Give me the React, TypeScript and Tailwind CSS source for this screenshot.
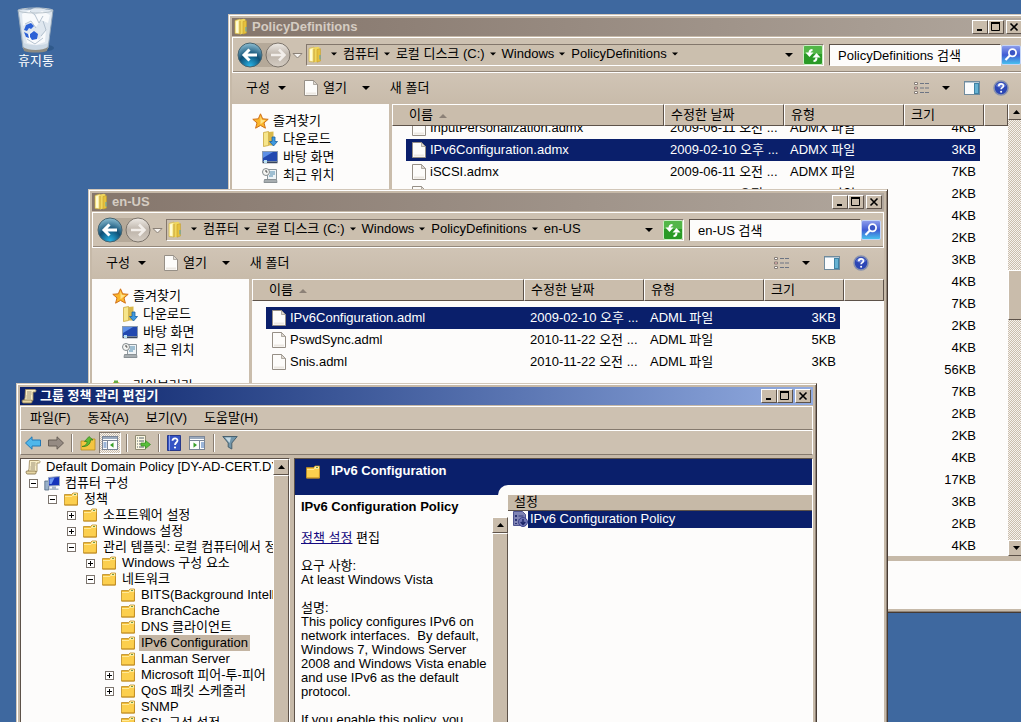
import type { ReactNode } from 'react';
import clsx from 'clsx';

type FileRow = { name?: string; date?: string; type?: string; size: string; selected?: boolean };

const POLICY_FILES: FileRow[] = [
  { name: 'InputPersonalization.admx', date: '2009-06-11 오전 ...', type: 'ADMX 파일', size: '4KB' },
  { name: 'IPv6Configuration.admx', date: '2009-02-10 오후 ...', type: 'ADMX 파일', size: '3KB', selected: true },
  { name: 'iSCSI.admx', date: '2009-06-11 오전 ...', type: 'ADMX 파일', size: '7KB' },
  { name: 'kdc.admx', date: '2009-06-11 오전 ...', type: 'ADMX 파일', size: '2KB' },
  // the en-US window covers everything but the size from here on
  { size: '4KB' },
  { size: '2KB' },
  { size: '3KB' },
  { size: '4KB' },
  { size: '7KB' },
  { size: '2KB' },
  { size: '4KB' },
  { size: '56KB' },
  { size: '7KB' },
  { size: '2KB' },
  { size: '2KB' },
  { size: '4KB' },
  { size: '17KB' },
  { size: '3KB' },
  { size: '2KB' },
  { size: '4KB' },
];

const LOCALE_FILES: FileRow[] = [
  { name: 'IPv6Configuration.adml', date: '2009-02-10 오후 ...', type: 'ADML 파일', size: '3KB', selected: true },
  { name: 'PswdSync.adml', date: '2010-11-22 오전 ...', type: 'ADML 파일', size: '5KB' },
  { name: 'Snis.adml', date: '2010-11-22 오전 ...', type: 'ADML 파일', size: '3KB' },
];

type TreeNode = { label: string; level: number; state?: 'open' | 'closed'; icon?: 'scroll' | 'computer'; selected?: boolean };

const TREE: TreeNode[] = [
  { label: 'Default Domain Policy [DY-AD-CERT.DY', level: 0, icon: 'scroll' },
  { label: '컴퓨터 구성', level: 1, state: 'open', icon: 'computer' },
  { label: '정책', level: 2, state: 'open' },
  { label: '소프트웨어 설정', level: 3, state: 'closed' },
  { label: 'Windows 설정', level: 3, state: 'closed' },
  { label: '관리 템플릿: 로컬 컴퓨터에서 정', level: 3, state: 'open' },
  { label: 'Windows 구성 요소', level: 4, state: 'closed' },
  { label: '네트워크', level: 4, state: 'open' },
  { label: 'BITS(Background Intelli', level: 5 },
  { label: 'BranchCache', level: 5 },
  { label: 'DNS 클라이언트', level: 5 },
  { label: 'IPv6 Configuration', level: 5, selected: true },
  { label: 'Lanman Server', level: 5 },
  { label: 'Microsoft 피어-투-피어', level: 5, state: 'closed' },
  { label: 'QoS 패킷 스케줄러', level: 5, state: 'closed' },
  { label: 'SNMP', level: 5 },
  { label: 'SSL 구성 설정', level: 5 },
];

const LEVEL_PAD = ['pl-1', 'pl-2', 'pl-[27px]', 'pl-[46px]', 'pl-[65px]', 'pl-[84px]'];

const RAISED = 'border border-t-white border-l-white border-r-[#5d5249] border-b-[#5d5249] bg-[#c9bcab]';

/* ---------- icons ---------- */

function Caret({ className = 'w-[7px]' }: { className?: string }) {
  return (
    <svg viewBox="0 0 8 4" className={clsx('h-1 shrink-0', className)} aria-hidden>
      <path d="M0 0h8L4 4z" fill="currentColor" />
    </svg>
  );
}

function ExplorerFolder() {
  return (
    <svg width="16" height="18" viewBox="0 0 16 18" className="shrink-0" aria-hidden>
      <path d="M2 2.500l5-1.500v15l-5-.5z" fill="#fbf0a0" stroke="#d0ae3c" strokeWidth=".6" />
      <path d="M7 1.500l4-.8 1.500.8V15L7 16.500z" fill="#f0d65c" />
      <path d="M3 3.500l2-.5v12L3 14.500z" fill="#fffbd6" />
      <path d="M7 3v13" stroke="#caa233" />
      <path d="M10 3.500l3.500-.8V15l-3.500 1.200z" fill="#e5c03c" stroke="#c09a2a" strokeWidth=".5" />
      <path d="M13 9v4.500" stroke="#4fa3c4" />
    </svg>
  );
}

function TreeFolder() {
  return (
    <svg width="16" height="14" viewBox="0 0 16 14" className="shrink-0" aria-hidden>
      <path d="M1.500 2.500h7l1.500-1.500h4.500v12h-13z" fill="#f3bd36" stroke="#b98a24" strokeWidth=".8" />
      <path d="M10 1.500h4v2.500H9z" fill="#fff1b5" />
      <path d="M11 2.500h2" stroke="#6f9a4a" />
      <path d="M2 4.500h7l1-1h4.200l-.7 9H1.800z" fill="#fccf4e" />
      <path d="M2 4.500h7l1-1h4" stroke="#ffe998" fill="none" />
      <path d="M1.500 13h13V4.500" fill="none" stroke="#c38f27" />
    </svg>
  );
}

function FileIcon() {
  return (
    <svg width="14" height="16" viewBox="0 0 14 16" className="shrink-0" aria-hidden>
      <path d="M.5.5h9l4 4v11H.5z" fill="#fdfcfa" stroke="#968f86" />
      <path d="M9.500.5v4h4z" fill="#ddd8d0" stroke="#968f86" strokeWidth=".7" />
      <path d="M2 13.500h10" stroke="#ece8e2" strokeWidth="2" />
    </svg>
  );
}

function StarIcon() {
  return (
    <svg width="17" height="16" viewBox="0 0 17 16" className="shrink-0" aria-hidden>
      <path d="M8.500.8l2.200 5 5.500.5-4.200 3.600 1.400 5.300-4.900-2.800-4.900 2.800L5 9.900.8 6.300l5.500-.5z" fill="#fbb72c" stroke="#d0701a" />
      <path d="M8.500 3l1.400 4 3.600.3-5 4z" fill="#ffe58a" />
    </svg>
  );
}

function DownloadIcon() {
  return (
    <svg width="16" height="16" viewBox="0 0 16 16" className="shrink-0" aria-hidden>
      <path d="M1.500 1.500l5-1v14l-5 1z" fill="#f6e58a" stroke="#c39c2c" strokeWidth=".7" />
      <path d="M6.500 1l5-.5v14h-5z" fill="#d9b849" />
      <path d="M10 6h3v4.500h2.500l-4 4.500-4-4.500H10z" fill="#3f9ae0" stroke="#1c5f9f" strokeWidth=".8" />
    </svg>
  );
}

function DesktopIcon() {
  return (
    <svg width="16" height="14" viewBox="0 0 16 14" className="shrink-0" aria-hidden>
      <rect x=".5" y="1.500" width="15" height="10" fill="#2248b0" stroke="#8b9bb0" />
      <path d="M1 2h10L1 8z" fill="#5d8fe6" />
      <path d="M.5 12.500h15" stroke="#38455c" strokeWidth="1.500" />
      <path d="M2 13v-3h3v3z" fill="#b9e0f3" />
    </svg>
  );
}

function RecentIcon() {
  return (
    <svg width="16" height="15" viewBox="0 0 16 15" className="shrink-0" aria-hidden>
      <path d="M5.500 1.500h9v10h-9z" fill="#eef3f6" stroke="#8d979d" />
      <path d="M8 4h5M8 6h5M7 8h4" stroke="#4e89ad" />
      <circle cx="4" cy="4" r="3.500" fill="#f6f6f3" stroke="#848b8e" />
      <path d="M4 2v2h1.500" stroke="#444" fill="none" />
      <path d="M2.500 11.500h12l.5 3H2z" fill="#a7adb0" stroke="#8a9195" />
    </svg>
  );
}

function LibraryIcon() {
  return (
    <svg width="16" height="14" viewBox="0 0 16 14" className="shrink-0" aria-hidden>
      <path d="M1 3h6l1 1.500h6V13H1z" fill="#eacb55" />
      <path d="M2 1.500h4v3H2z" fill="#65ac45" />
      <path d="M8 5h7v7H8z" fill="#72b7dc" />
    </svg>
  );
}

function ScrollIcon() {
  return (
    <svg width="16" height="16" viewBox="0 0 16 16" className="shrink-0" aria-hidden>
      <path d="M4.500 1.500h9c2 0 2 2.500.5 2.500h-2v8.500h-9L4 10z" fill="#f8edc6" stroke="#a28f65" strokeWidth=".9" />
      <path d="M1.500 12h9c1 1 .8 3-.5 3H2.500c-1.500 0-1.700-2-1-3z" fill="#e7d6a3" stroke="#8b7b54" strokeWidth=".9" />
      <path d="M6 4h4.500M6 6h4.500M5.500 8H10M5.500 10H10" stroke="#9b8f76" />
    </svg>
  );
}

function ComputerIcon() {
  return (
    <svg width="17" height="15" viewBox="0 0 17 15" className="shrink-0" aria-hidden>
      <path d="M.8 5h4v9h-4z" fill="#97afc9" stroke="#52677f" strokeWidth=".8" />
      <path d="M4.500 1.500l11-1v9l-11 .5z" fill="#1533bb" stroke="#9aa8c0" />
      <path d="M5.500 2.500l5-.5-3 6h-2z" fill="#6f98ef" />
      <path d="M8 10.500h4v2H8zM5.500 12.500h9V14h-9z" fill="#aab7c7" />
    </svg>
  );
}

function HelpIcon() {
  return (
    <svg width="16" height="16" viewBox="0 0 16 16" aria-hidden>
      <circle cx="8" cy="8" r="7" fill="#2c46b5" stroke="#8690ae" strokeWidth="1.500" />
      <path d="M3 6a5.500 5.500 0 0110 0c-3 2-7 2-10 0z" fill="#7c92e2" opacity=".7" />
      <path d="M5.800 6.200c0-3 4.600-3 4.600-.3 0 1.700-2.300 1.700-2.300 3.400" fill="none" stroke="#fff" strokeWidth="1.700" />
      <circle cx="8.100" cy="11.700" r="1" fill="#fff" />
    </svg>
  );
}

function ListViewIcon() {
  return (
    <svg width="16" height="14" viewBox="0 0 16 14" aria-hidden>
      <path d="M.5 1.500h3v2h-3zM.5 6h3v2h-3zM.5 10.500h3v2h-3z" fill="#fff" stroke="#877e78" />
      <path d="M1.500 7h1" stroke="#b33" />
      <path d="M6 2.500h4M11 2.500h4M6 7h4M11 7h4M6 11.500h4M11 11.500h4" stroke="#6d7584" />
    </svg>
  );
}

function PreviewIcon() {
  return (
    <svg width="17" height="14" viewBox="0 0 17 14" aria-hidden>
      <rect x=".5" y=".5" width="15" height="13" fill="#fbfcfd" stroke="#708b9d" />
      <path d="M1 1.500h14" stroke="#b7c9d6" />
      <rect x="10.500" y="2.500" width="4" height="10" fill="#67b2d3" stroke="#3f83a5" />
    </svg>
  );
}

function NavButtons() {
  return (
    <div className="relative flex h-[26px] w-[72px] shrink-0 items-center pl-1">
      <svg width="68" height="26" viewBox="0 0 68 26" className="absolute left-1 top-0" aria-hidden>
        <defs>
          <radialGradient id="nav-back" cx=".5" cy=".95" r=".95">
            <stop offset="0" stopColor="#27b3e6" />
            <stop offset=".5" stopColor="#0f4f75" />
            <stop offset="1" stopColor="#8fc0d4" />
          </radialGradient>
          <linearGradient id="nav-fwd" x2="0" y2="1">
            <stop offset="0" stopColor="#efebe6" />
            <stop offset=".5" stopColor="#bdb4aa" />
            <stop offset="1" stopColor="#d5cdc3" />
          </linearGradient>
        </defs>
        <path d="M13 1h28v24H13z" fill="#b5a999" />
        <circle cx="13" cy="13" r="12" fill="url(#nav-back)" stroke="#46636f" />
        <path d="M12.500 7.500L7 13l5.500 5.500M7.500 13H20" fill="none" stroke="#fff" strokeWidth="3" />
        <circle cx="41" cy="13" r="12" fill="url(#nav-fwd)" stroke="#7c746b" />
        <path d="M42 7.500l5.500 5.500-5.500 5.500M47 13H34" fill="none" stroke="#f2eeea" strokeWidth="2.500" />
        <path d="M56 11.500h9L60.500 16z" fill="#f6f3ef" stroke="#8b8177" />
      </svg>
      <button aria-label="뒤로" className="relative h-[26px] w-[26px] rounded-full" />
      <button aria-label="앞으로" className="relative ml-0.5 h-[26px] w-[26px] rounded-full" />
    </div>
  );
}

function RefreshIcon() {
  return (
    <svg width="20" height="20" viewBox="0 0 20 20" aria-hidden>
      <rect x=".5" y=".5" width="19" height="19" rx="1.500" fill="#2a9a26" stroke="#c9efc2" />
      <path d="M1 1h18v8H1z" fill="#6fca5f" opacity=".6" />
      <path d="M9.500 5C7 5 6.500 6 6.500 8" fill="none" stroke="#fff" strokeWidth="2" />
      <path d="M2.500 7.500h8l-4 4.500z" fill="#fff" />
      <path d="M10.500 16c2.500 0 3-1 3-3.500" fill="none" stroke="#fff" strokeWidth="2" />
      <path d="M9.500 12.500h8L13.500 8z" fill="#fff" />
    </svg>
  );
}

function SearchIcon() {
  return (
    <svg width="20" height="20" viewBox="0 0 20 20" aria-hidden>
      <defs>
        <linearGradient id="search-fill" x2="0" y2="1">
          <stop offset="0" stopColor="#8f9fec" />
          <stop offset=".5" stopColor="#3f5cd4" />
          <stop offset="1" stopColor="#49c6ef" />
        </linearGradient>
      </defs>
      <rect x=".5" y=".5" width="19" height="19" rx="1.500" fill="url(#search-fill)" stroke="#c4d4f6" />
      <circle cx="11.500" cy="7.800" r="3.600" fill="#3a55c4" stroke="#fff" strokeWidth="1.800" />
      <path d="M8.800 10.500L4.500 15" stroke="#fff" strokeWidth="2.200" />
    </svg>
  );
}

function TrashIcon() {
  return (
    <svg width="40" height="46" viewBox="0 0 40 46" aria-hidden>
      <ellipse cx="23" cy="41" rx="15" ry="4" fill="#27507f" opacity=".6" />
      <path d="M2 3l5 38c2 4 22 4 25 0l5-38z" fill="#cbd8e4" stroke="#96a8ba" />
      <path d="M3 4c4-4 9 0 13-2s9-1 12 0 7 0 8 3L32 36c-5 3-19 3-24 0z" fill="#dfe7ef" />
      <path d="M6 7l8-4 5 5 7-4 8 4-2 8-7-3-5 7-7-5-6 4zM10 30l6-6 7 9 7-10-1 12-9 3-9-2z" fill="#f8fafc" />
      <path d="M14 4l5 4 4 8 4-7M9 17l6-3 5 7M27 14l3 9-5 6M11 32l8 5 8-6" fill="none" stroke="#aebccb" strokeWidth=".9" />
      <path d="M10 18l5-2 3 3-3 3-2-1-2 3-3-1zM8 25l4 2 1 4-3-1zM14 27l4-3 4 3-1 5-5 1-2-3z" fill="#2c61d6" />
      <path d="M7 40c5 4 20 4 25 0l-1 4c-5 2-18 2-23 0z" fill="#8d8b83" />
      <ellipse cx="19.500" cy="3.500" rx="17.500" ry="2.500" fill="none" stroke="#b9c4cc" />
    </svg>
  );
}

function ArrowIcon({ right = false }: { right?: boolean }) {
  return (
    <svg width="16" height="14" viewBox="0 0 16 14" aria-hidden>
      {right ? (
        <path d="M15.500 7L9 .8V4H.5v6H9v3.200z" fill="#958b83" stroke="#675e57" />
      ) : (
        <path d="M.5 7L7 .8V4h8.500v6H7v3.200z" fill="#4fb7ea" stroke="#2278b5" />
      )}
    </svg>
  );
}

function FolderUpIcon() {
  return (
    <svg width="16" height="16" viewBox="0 0 16 16" aria-hidden>
      <path d="M1 6h7l1.500-2H15v11H1z" fill="#f4c542" stroke="#b98a24" strokeWidth=".8" />
      <path d="M2 11.500c4-1 5-2.500 5-5H4.500L9 1.500l4 3.500h-2.500c0 4-3 7-8.500 6.500z" fill="#5fbb34" stroke="#2f7d1b" strokeWidth=".7" />
    </svg>
  );
}

function ConsoleIcon({ right = false }: { right?: boolean }) {
  return (
    <svg width="16" height="14" viewBox="0 0 16 14" aria-hidden>
      <rect x=".5" y=".5" width="15" height="13" fill="#fdfdfd" stroke="#7a8596" />
      <path d="M1 2h14" stroke="#9aa9bd" strokeWidth="2" />
      <path d="M1 4.500h14" stroke="#7a8596" />
      {right ? (
        <>
          <path d="M10.500 5v8" stroke="#7a8596" />
          <path d="M12 7h3M12 9h3M12 11h3" stroke="#3a6fb5" />
          <path d="M4.500 6.500L8 9l-3.500 2.800z" fill="#39a02a" />
        </>
      ) : (
        <>
          <path d="M5.500 5v8" stroke="#7a8596" />
          <path d="M1.500 7h3M1.500 9h3M1.500 11h3" stroke="#3a6fb5" />
          <path d="M11.500 6.500L8 9l3.500 2.800z" fill="#39a02a" />
        </>
      )}
    </svg>
  );
}

function ExportIcon() {
  return (
    <svg width="16" height="15" viewBox="0 0 16 15" aria-hidden>
      <path d="M.5.5h10v14H.5z" fill="#fbf7e2" stroke="#8f8a72" />
      <path d="M2 3h1M4 3h5M2 6h1M4 6h5M2 9h1M4 9h3M2 12h1M4 12h5" stroke="#55606a" />
      <path d="M6 8h4.500V5.500l5 4-5 4V11H6z" fill="#58bf3a" stroke="#348a1f" strokeWidth=".7" />
    </svg>
  );
}

function BookHelpIcon() {
  return (
    <svg width="14" height="16" viewBox="0 0 14 16" aria-hidden>
      <path d="M.5.5h13v15H.5z" fill="#3654c4" stroke="#27388a" />
      <path d="M2.500.5v15" stroke="#8ea3ec" />
      <path d="M5.500 5.800c0-3.200 5-3.200 5-.3C10.500 7.500 8 7.500 8 10" fill="none" stroke="#fff" strokeWidth="1.800" />
      <circle cx="8" cy="12.500" r="1.100" fill="#fff" />
    </svg>
  );
}

function FilterIcon() {
  return (
    <svg width="16" height="15" viewBox="0 0 16 15" aria-hidden>
      <path d="M.8 1.500h14.400L9.800 8v6L6.200 12V8z" fill="#7397ab" stroke="#48616f" />
      <path d="M3 2.500h6L7.500 8z" fill="#c7dae3" />
    </svg>
  );
}

function PolicyIcon() {
  return (
    <svg width="16" height="16" viewBox="0 0 16 16" className="shrink-0" aria-hidden>
      <path d="M1.500.5h9l3 3v11h-12z" fill="#8084b4" stroke="#4e5490" />
      <path d="M3 4h2v2H3zM3 8h2v2H3zM3 12h2v1H3z" fill="#2c3474" />
      <path d="M6.500 5h5M6.500 9h2" stroke="#343c7c" />
      <circle cx="11" cy="11" r="4.500" fill="#7176b4" stroke="#3f458c" />
      <path d="M11 8v5M8.700 11l2.300 2.500 2.300-2.500" stroke="#1a2468" strokeWidth="1.400" fill="none" />
    </svg>
  );
}

/* ---------- window chrome ---------- */

function ControlButton({ label, children }: { label: string; children: ReactNode }) {
  return (
    <button aria-label={label} className={clsx('flex h-3.5 w-4 items-center justify-center', RAISED)}>
      <svg width="10" height="10" viewBox="0 0 10 10" fill="none" stroke="#000" aria-hidden>
        {children}
      </svg>
    </button>
  );
}

function TitleBar({ title, icon, active = false }: { title: string; icon: ReactNode; active?: boolean }) {
  return (
    <div
      className={clsx(
        'flex h-[18px] shrink-0 items-center gap-[3px] overflow-hidden pr-0.5 pl-px font-bold',
        active
          ? 'bg-linear-to-r from-[#0a1f68] to-[#92abe0] text-white'
          : 'bg-linear-to-r from-[#85766c] to-[#b0a69c] text-[#d5ccc2]',
      )}
    >
      {icon}
      <h2 className="flex-1 text-[13px] leading-[18px]">{title}</h2>
      <div className="flex">
        <ControlButton label="최소화">
          <path d="M2 8h5" strokeWidth="2" />
        </ControlButton>
        <ControlButton label="최대화">
          <path d="M.5 1.500h8v7h-8z" />
          <path d="M0 1h9" strokeWidth="2" />
        </ControlButton>
        <div className="w-0.5" />
        <ControlButton label="닫기">
          <path d="M1.500 1.500l7 7M8.500 1.500l-7 7" strokeWidth="1.600" />
        </ControlButton>
      </div>
    </div>
  );
}

function Window({ className, label, children }: { className: string; label: string; children: ReactNode }) {
  return (
    <section
      aria-label={label}
      className={clsx(
        'absolute flex flex-col border border-t-[#d2c7b9] border-r-[#453a33] border-b-[#453a33] border-l-[#d2c7b9] bg-[#c6b9a8] p-[3px] shadow-[inset_1px_1px_0_#fff,inset_-1px_-1px_0_#918477]',
        className,
      )}
    >
      {children}
    </section>
  );
}

function ScrollArrow({ down = false }: { down?: boolean }) {
  return (
    <button aria-label={down ? '아래로 스크롤' : '위로 스크롤'} className={clsx('flex h-4 w-full shrink-0 items-center justify-center', RAISED)}>
      <svg width="7" height="4" viewBox="0 0 7 4" aria-hidden>
        <path d={down ? 'M0 0h7L3.500 4z' : 'M0 4h7L3.500 0z'} />
      </svg>
    </button>
  );
}

/* ---------- explorer ---------- */

function Sidebar() {
  return (
    <nav className="w-[157px] shrink-0 overflow-hidden bg-[#fdfcfb] pt-2 pl-5 leading-[18px]">
      <a href="#favorites" className="flex items-center gap-1">
        <StarIcon />
        즐겨찾기
      </a>
      <ul className="pl-2.5">
        <li>
          <a href="#downloads" className="flex items-center gap-[5px]">
            <DownloadIcon />
            다운로드
          </a>
        </li>
        <li>
          <a href="#desktop" className="flex items-center gap-[5px]">
            <DesktopIcon />
            바탕 화면
          </a>
        </li>
        <li>
          <a href="#recent" className="flex items-center gap-[5px]">
            <RecentIcon />
            최근 위치
          </a>
        </li>
      </ul>
      <a href="#libraries" className="mt-[18px] flex items-center gap-[5px]">
        <LibraryIcon />
        라이브러리
      </a>
    </nav>
  );
}

const HEAD_CELL = 'block border border-t-white border-l-white border-r-[#5d5249] border-b-[#5d5249] text-left font-normal leading-5';

function FileTable({ files, scrolled = false }: { files: FileRow[]; scrolled?: boolean }) {
  return (
    <table className="flex min-w-0 flex-1 flex-col overflow-hidden bg-[#fdfcfb]">
      <thead className="relative z-10 block bg-[#cabdac]">
        <tr className="flex h-[22px]">
          <th className={clsx(HEAD_CELL, 'w-[272px] pl-4')}>
            이름
            <svg width="8" height="4" viewBox="0 0 8 4" className="ml-1.5 inline-block align-middle" aria-hidden>
              <path d="M0 4h8L4 0z" fill="#8c8177" />
            </svg>
          </th>
          <th className={clsx(HEAD_CELL, 'w-[120px] pl-1.5')}>수정한 날짜</th>
          <th className={clsx(HEAD_CELL, 'w-[120px] pl-1.5')}>유형</th>
          <th className={clsx(HEAD_CELL, 'w-20 pl-1.5')}>크기</th>
          <td className={clsx(HEAD_CELL, 'flex-1')} />
        </tr>
      </thead>
      <tbody className={clsx('block', scrolled ? '-mt-[9px]' : 'mt-1.5')}>
        {files.map((f, i) => (
          <tr
            key={i}
            className={clsx('ml-3.5 flex h-[22px] w-[574px] items-center leading-[22px] whitespace-nowrap', f.selected && 'bg-[#0a1f6b] text-white')}
          >
            <td className="flex w-[258px] items-center gap-1 pl-1.5">
              <FileIcon />
              {f.name}
            </td>
            <td className="w-[120px] pl-1.5">{f.date}</td>
            <td className="w-[120px] pl-1.5">{f.type}</td>
            <td className="w-[76px] pr-1 text-right">{f.size}</td>
          </tr>
        ))}
      </tbody>
    </table>
  );
}

function Explorer({
  title,
  path,
  files,
  className,
  scrolled = false,
}: {
  title: string;
  path: string[];
  files: FileRow[];
  className: string;
  scrolled?: boolean;
}) {
  return (
    <Window label={title} className={className}>
      <TitleBar title={title} icon={<ExplorerFolder />} />

      <div className="mt-px flex h-9 shrink-0 items-center border border-white bg-[#cdc1b1] pr-0.5 shadow-[inset_0_-1px_0_#94887b]">
        <NavButtons />
        <div className="ml-px flex h-[22px] flex-1 items-center border border-t-[#83776c] border-r-white border-b-white border-l-[#83776c] bg-[#cbbfae]">
          <ExplorerFolder />
          <ol className="ml-2 flex flex-1 items-center gap-[5px] pb-0.5 leading-4">
            {path.map((part) => (
              <li key={part} className="flex items-center gap-1.5">
                <Caret className="w-1.5" />
                <button className="whitespace-nowrap">{part}</button>
              </li>
            ))}
            {scrolled && <Caret className="w-1.5" />}
          </ol>
          <button aria-label="이전 위치" className="px-2.5">
            <Caret className="w-2" />
          </button>
          <button aria-label="새로 고침">
            <RefreshIcon />
          </button>
        </div>
        <input
          aria-label={`${title} 검색`}
          defaultValue={`${title} 검색`}
          className="ml-[5px] h-[22px] w-[172px] shrink-0 border border-t-[#5d5249] border-r-white border-b-white border-l-[#5d5249] bg-[#fdfcfb] pb-0.5 pl-2 leading-4 outline-none"
        />
        <button aria-label="검색" className="shrink-0">
          <SearchIcon />
        </button>
      </div>

      <div className="flex h-[31px] shrink-0 items-center bg-linear-to-b from-[#d0c4b5] to-[#c8bbaa] pr-[15px] pb-0.5 pl-3.5">
        <button className="flex items-center gap-2">
          구성
          <Caret className="w-2" />
        </button>
        <button className="ml-[18px] flex items-center gap-[5px]">
          <FileIcon />
          열기
        </button>
        <button aria-label="열기 옵션" className="ml-[15px]">
          <Caret className="w-2" />
        </button>
        <button className="ml-5">새 폴더</button>
        <div className="flex-1" />
        <button aria-label="보기 변경">
          <ListViewIcon />
        </button>
        <button aria-label="보기 옵션" className="ml-3">
          <Caret className="w-2" />
        </button>
        <button aria-label="미리 보기 창" className="ml-3.5">
          <PreviewIcon />
        </button>
        <button aria-label="도움말" className="ml-3">
          <HelpIcon />
        </button>
      </div>

      <div className="flex min-h-0 flex-1 overflow-hidden">
        <Sidebar />
        <div className="w-[3px] shrink-0 bg-[#cabdac]" />
        <FileTable files={files} scrolled={scrolled} />
        {scrolled && (
          <div className="flex w-4 shrink-0 flex-col bg-[repeating-conic-gradient(#cabdac_0_25%,#f6f2ed_0_50%)] bg-size-[2px_2px]">
            <ScrollArrow />
            <div className="h-[150px]" />
            <div className={clsx('h-[50px]', RAISED)} />
            <div className="flex-1" />
            <ScrollArrow down />
          </div>
        )}
      </div>

      <div className="mt-[5px] h-12 shrink-0 bg-[#fdfcfb]" />
    </Window>
  );
}

/* ---------- group policy editor ---------- */

function Expander({ open }: { open: boolean }) {
  return (
    <button aria-label={open ? '축소' : '확장'} className="shrink-0">
      <svg width="9" height="9" viewBox="0 0 9 9" className="block" aria-hidden>
        <rect x=".5" y=".5" width="8" height="8" fill="#fff" stroke="#7c746d" />
        <path d={open ? 'M2 4.500h5' : 'M2 4.500h5M4.500 2v5'} stroke="#000" />
      </svg>
    </button>
  );
}

function TreeRow({ node }: { node: TreeNode }) {
  return (
    <li className={clsx('flex h-4 items-center whitespace-nowrap', LEVEL_PAD[node.level])}>
      {node.level > 0 && <span className="mr-1.5 flex w-[9px] shrink-0">{node.state && <Expander open={node.state === 'open'} />}</span>}
      <span className="flex w-4 shrink-0">
        {node.icon === 'scroll' ? <ScrollIcon /> : node.icon === 'computer' ? <ComputerIcon /> : <TreeFolder />}
      </span>
      <span className={clsx('ml-[3px] px-0.5 leading-4', node.selected && 'bg-[#c4b5a3]')}>{node.label}</span>
    </li>
  );
}

function ToolSeparator() {
  return <div className="h-[18px] w-0.5 border-l border-[#897d71] bg-white" />;
}

function PolicyEditor() {
  return (
    <Window label="그룹 정책 관리 편집기" className="top-[383px] left-4 h-[600px] w-[801px]">
      <TitleBar title="그룹 정책 관리 편집기" icon={<ScrollIcon />} active />

      <div className="mt-px flex h-6 shrink-0 items-center gap-[17px] border border-white border-b-[#857a6e] bg-[#cdc1b1] pl-[9px]">
        <button>파일(F)</button>
        <button>동작(A)</button>
        <button>보기(V)</button>
        <button>도움말(H)</button>
      </div>
      <div className="flex h-[25px] shrink-0 items-center border border-white border-b-[#857a6e] bg-[#cdc1b1] pl-1">
        <button aria-label="뒤로">
          <ArrowIcon />
        </button>
        <button aria-label="앞으로" className="mx-[7px]">
          <ArrowIcon right />
        </button>
        <ToolSeparator />
        <button aria-label="한 수준 위로" className="mr-[3px] ml-[7px]">
          <FolderUpIcon />
        </button>
        <button
          aria-label="콘솔 트리 표시"
          aria-pressed="true"
          className="mr-[5px] flex h-[22px] w-[22px] items-center justify-center border border-t-[#857a6e] border-r-white border-b-white border-l-[#857a6e] bg-[repeating-conic-gradient(#cabdac_0_25%,#f6f2ed_0_50%)] bg-size-[2px_2px]"
        >
          <ConsoleIcon />
        </button>
        <ToolSeparator />
        <button aria-label="목록 내보내기" className="mx-[7px]">
          <ExportIcon />
        </button>
        <ToolSeparator />
        <button aria-label="도움말" className="ml-[7px]">
          <BookHelpIcon />
        </button>
        <button aria-label="작업 창 표시" className="mx-2">
          <ConsoleIcon right />
        </button>
        <ToolSeparator />
        <button aria-label="필터" className="ml-[7px]">
          <FilterIcon />
        </button>
      </div>

      <div className="mt-[3px] flex min-h-0 flex-1">
        <div className="flex w-[270px] shrink-0 border border-[#5d5249] border-r-white bg-[#fdfcfb]">
          <ul className="min-w-0 flex-1 overflow-hidden">
            {TREE.map((node) => (
              <TreeRow key={node.label} node={node} />
            ))}
          </ul>
          <div className="flex w-4 shrink-0 flex-col bg-[#c4b6a4]">
            <ScrollArrow />
            <div className={clsx('flex-1', RAISED)} />
          </div>
        </div>

        <div className="ml-1 flex min-w-0 flex-1 flex-col border border-[#5d5249] border-r-white bg-[#fdfcfb]">
          <div className="flex h-9 shrink-0 bg-[#0a1f6b]">
            <div className="flex w-[203px] items-start gap-2.5 pt-1 pl-2.5">
              <span className="pt-0.5">
                <TreeFolder />
              </span>
              <h3 className="text-[13px] leading-4 font-bold whitespace-nowrap text-white">IPv6 Configuration</h3>
            </div>
            <div className="mt-[26px] flex-1 rounded-tl-[10px] bg-[#fdfcfb]" />
          </div>

          <div className="flex min-h-0 flex-1">
            <div className="w-[197px] shrink-0 overflow-hidden pt-1 pl-1.5 leading-[14px] whitespace-pre">
              <h3 className="text-[13px] leading-4 font-bold">IPv6 Configuration Policy</h3>
              <p className="mt-4">
                <a href="#edit" className="text-[#150a80] underline">
                  정책 설정
                </a>{' '}
                편집
              </p>
              <p className="mt-3.5">
                요구 사항:
                <br />
                At least Windows Vista
              </p>
              <p className="mt-3.5">
                설명:
                <br />
                This policy configures IPv6 on
                <br />
                {'network interfaces.  By default,'}
                <br />
                Windows 7, Windows Server
                <br />
                2008 and Windows Vista enable
                <br />
                and use IPv6 as the default
                <br />
                protocol.
              </p>
              <p className="mt-3.5">If you enable this policy, you</p>
            </div>
            <div className="mt-[22px] flex w-4 shrink-0 flex-col bg-[#c4b6a4]">
              <ScrollArrow />
              <div className={clsx('flex-1', RAISED)} />
            </div>
            <div className="min-w-0 flex-1">
              <div className="h-4 border-b border-[#5d5249] bg-[#c6b9a7] pl-1.5 leading-[14px]">설정</div>
              <button className="flex h-[17px] w-full pl-1 text-left">
                <PolicyIcon />
                <span className="h-full flex-1 bg-[#0a1f6b] pl-0.5 leading-4 text-white">IPv6 Configuration Policy</span>
              </button>
            </div>
          </div>
        </div>
      </div>
    </Window>
  );
}

export default function App() {
  return (
    <main className="relative h-screen overflow-hidden bg-[#3e689f] font-['Liberation_Sans','Noto_Sans_CJK_KR',sans-serif] text-[13px] leading-4 text-black">
      <a href="#recycle-bin" className="absolute top-[7px] left-4 flex w-10 flex-col items-center whitespace-nowrap text-white">
        <TrashIcon />
        휴지통
      </a>

      <Explorer
        title="PolicyDefinitions"
        path={['컴퓨터', '로컬 디스크 (C:)', 'Windows', 'PolicyDefinitions']}
        files={POLICY_FILES}
        className="top-3.5 left-[228px] h-[599px] w-[800px]"
        scrolled
      />
      <Explorer
        title="en-US"
        path={['컴퓨터', '로컬 디스크 (C:)', 'Windows', 'PolicyDefinitions', 'en-US']}
        files={LOCALE_FILES}
        className="top-[189px] left-[88px] h-[599px] w-[800px]"
      />
      <PolicyEditor />
    </main>
  );
}
